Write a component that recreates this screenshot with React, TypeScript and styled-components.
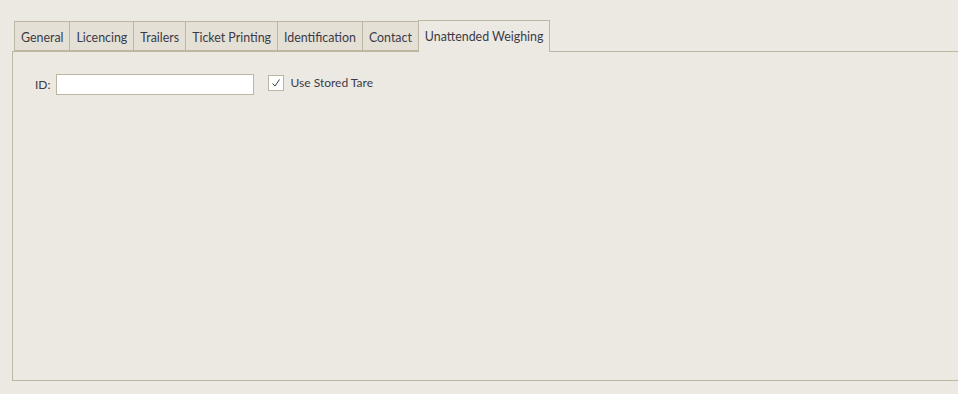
import React, { useState } from "react";
import styled, { createGlobalStyle } from "styled-components";

const GlobalStyle = createGlobalStyle`
  html, body {
    margin: 0;
    padding: 0;
    background: #ece9e3;
    overflow: hidden;
  }
  body {
    font-family: Lato, "Noto Sans", sans-serif;
    font-size: 12px;
    color: #3b3a48;
  }
`;

const Page = styled.div`
  width: 958px;
  height: 394px;
  padding: 20px 0 0 12px;
  box-sizing: border-box;
`;

const TabStrip = styled.div`
  display: flex;
  align-items: flex-end;
  height: 31px;
  padding-left: 2px;
`;

const Tab = styled.button<{ $active?: boolean }>`
  font: inherit;
  font-size: 12.4px;
  color: inherit;
  height: ${(p) => (p.$active ? "32px" : "30px")};
  padding: 0 6px;
  margin-left: -1px;
  margin-bottom: ${(p) => (p.$active ? "-1px" : "0")};
  border: 1px solid #bdb6a2;
  border-bottom: ${(p) => (p.$active ? "none" : "1px solid #bdb6a2")};
  background: ${(p) => (p.$active ? "#ece9e3" : "#e4e0d5")};
  position: relative;
  z-index: ${(p) => (p.$active ? 1 : 0)};
  cursor: pointer;
  display: flex;
  align-items: center;
  padding-top: ${(p) => (p.$active ? "0" : "2px")};
  &:first-child {
    margin-left: 0;
  }
`;

const Panel = styled.div`
  width: 960px;
  height: 330px;
  border: 1px solid #bdb6a2;
  border-right: none;
  box-sizing: border-box;
  padding: 22px 0 0 22px;
`;

const Row = styled.div`
  display: flex;
  align-items: center;
`;

const Label = styled.label`
  margin-right: 5px;
`;

const TextInput = styled.input`
  width: 198px;
  height: 21px;
  box-sizing: border-box;
  border: 1px solid #bdb6a2;
  background: #ffffff;
  outline: none;
  font: inherit;
`;

const CheckWrap = styled.label`
  display: flex;
  align-items: center;
  margin-left: 14px;
  margin-top: -4px;
  cursor: pointer;
`;

const Box = styled.span`
  width: 16px;
  height: 16px;
  box-sizing: border-box;
  border: 1px solid #bdb6a2;
  background: #ffffff;
  display: flex;
  align-items: center;
  justify-content: center;
  margin-right: 7px;
`;

const tabs = [
  "General",
  "Licencing",
  "Trailers",
  "Ticket Printing",
  "Identification",
  "Contact",
  "Unattended Weighing",
];

const App: React.FC = () => {
  const [active, setActive] = useState(6);
  const [checked, setChecked] = useState(true);

  return (
    <>
      <GlobalStyle />
      <Page>
        <TabStrip>
          {tabs.map((t, i) => (
            <Tab key={t} $active={i === active} onClick={() => setActive(i)}>
              {t}
            </Tab>
          ))}
        </TabStrip>
        <Panel>
          <Row>
            <Label>ID:</Label>
            <TextInput />
            <CheckWrap onClick={() => setChecked(!checked)}>
              <Box>
                {checked && (
                  <svg width="10" height="10" viewBox="0 0 10 10">
                    <path d="M1.5 5.5 L4 8 L8.5 1.5" fill="none" stroke="#3b3a48" strokeWidth="1" />
                  </svg>
                )}
              </Box>
              Use Stored Tare
            </CheckWrap>
          </Row>
        </Panel>
      </Page>
    </>
  );
};

export default App;
